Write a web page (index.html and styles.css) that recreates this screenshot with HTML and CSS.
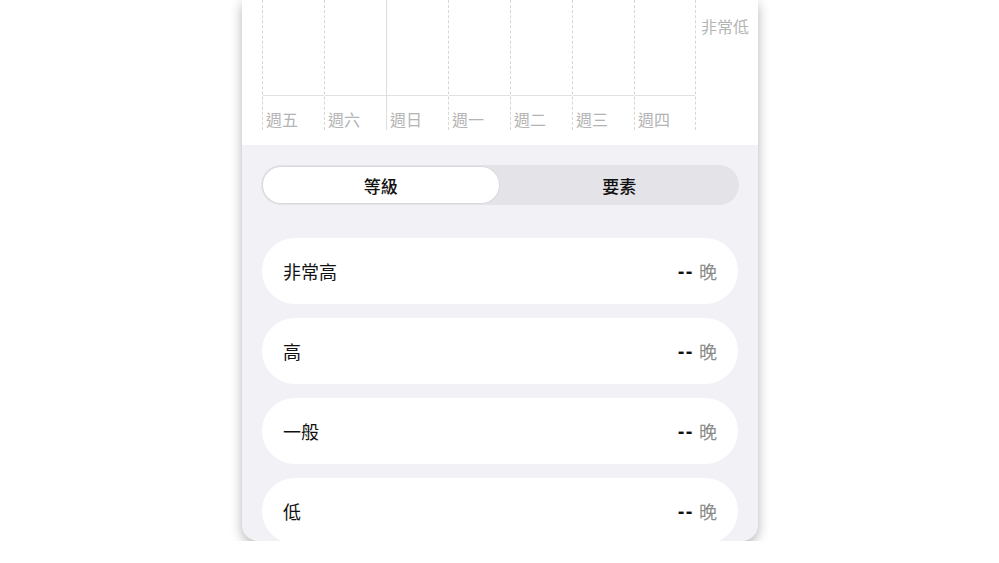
FILE: index.html
```html
<!DOCTYPE html>
<html lang="zh-Hant">
<head>
<meta charset="utf-8">
<link rel="stylesheet" href="styles.css">
</head>
<body>
<div class="phone">
  <section class="chart-card">
    <div class="grid">
      <div class="col"><div class="plot"></div><div class="lbl">週五</div></div>
      <div class="col"><div class="plot"></div><div class="lbl">週六</div></div>
      <div class="col solid"><div class="plot"></div><div class="lbl">週日</div></div>
      <div class="col"><div class="plot"></div><div class="lbl">週一</div></div>
      <div class="col"><div class="plot"></div><div class="lbl">週二</div></div>
      <div class="col"><div class="plot"></div><div class="lbl">週三</div></div>
      <div class="col last"><div class="plot"></div><div class="lbl">週四</div></div>
    </div>
    <div class="axis-label">非常低</div>
  </section>
  <section class="content">
    <div class="segmented">
      <div class="seg active">等級</div>
      <div class="seg">要素</div>
    </div>
    <div class="list">
      <div class="row"><span class="name">非常高</span><span class="val"><b class="dash">--</b> <span class="unit">晚</span></span></div>
      <div class="row"><span class="name">高</span><span class="val"><b class="dash">--</b> <span class="unit">晚</span></span></div>
      <div class="row"><span class="name">一般</span><span class="val"><b class="dash">--</b> <span class="unit">晚</span></span></div>
      <div class="row"><span class="name">低</span><span class="val"><b class="dash">--</b> <span class="unit">晚</span></span></div>
    </div>
  </section>
</div>
</body>
</html>
```
FILE: styles.css
```css
html, body {
  margin: 0;
  padding: 0;
  background: #ffffff;
  font-family: "Noto Sans CJK TC", "Noto Sans", sans-serif;
}
.phone {
  width: 516px;
  height: 541px;
  margin-left: 242px;
  background: #f2f2f6;
  border-radius: 0 0 16px 16px;
  box-shadow: 0 4px 12px rgba(0, 0, 0, 0.3);
  overflow: hidden;
  display: flex;
  flex-direction: column;
}
.chart-card {
  height: 145px;
  background: #ffffff;
  display: flex;
  padding-left: 20px;
  flex-shrink: 0;
}
.grid {
  display: flex;
  height: 130px;
}
.col {
  width: 62px;
  border-left: 1px dashed #d6d6d6;
  box-sizing: border-box;
  display: flex;
  flex-direction: column;
}
.col.solid {
  border-left: 1px solid #dedede;
}
.col.last {
  border-right: 1px dashed #d6d6d6;
}
.plot {
  height: 95px;
  border-bottom: 1px solid #e2e2e2;
  flex-shrink: 0;
}
.lbl {
  font-size: 16px;
  line-height: 20px;
  margin-top: 13px;
  padding-left: 3px;
  color: #b4b4b4;
  white-space: nowrap;
}
.axis-label {
  font-size: 16px;
  line-height: 20px;
  color: #b4b4b4;
  margin-top: 16px;
  margin-left: 5px;
}
.content {
  padding: 20px 20px 0 20px;
  display: flex;
  flex-direction: column;
}
.segmented {
  height: 40px;
  box-sizing: border-box;
  padding: 2px;
  background: #e3e3e8;
  border-radius: 20px;
  display: flex;
  margin-left: -1px;
  margin-right: -1px;
}
.seg {
  flex: 1;
  display: flex;
  align-items: center;
  justify-content: center;
  font-size: 17px;
  font-weight: 500;
  color: #111111;
  border-radius: 18px;
}
.seg.active {
  background: #ffffff;
  box-shadow: 0 0 0 1px #d9d9dd;
  margin-right: 3px;
}
.list {
  margin-top: 33px;
  display: flex;
  flex-direction: column;
  gap: 14px;
}
.row {
  height: 66px;
  flex-shrink: 0;
  background: #ffffff;
  border-radius: 33px;
  display: flex;
  align-items: center;
  justify-content: space-between;
  padding: 0 21px;
}
.name {
  font-size: 18px;
  color: #111111;
}
.val {
  font-size: 18px;
  display: flex;
  align-items: center;
  gap: 5px;
}
.dash {
  font-family: "Liberation Sans", sans-serif;
  font-weight: 700;
  font-size: 20px;
  color: #111111;
  letter-spacing: 1.5px;
}
.unit {
  color: #8a8a8a;
}
```
